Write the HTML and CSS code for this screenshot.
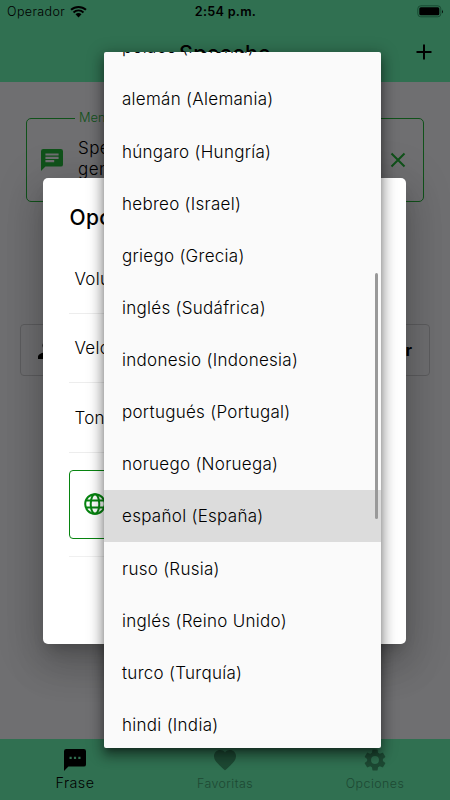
FILE: index.html
```html
<!DOCTYPE html>
<html lang="es">
<head>
<meta charset="utf-8">
<title>Speeche</title>
<link rel="stylesheet" href="styles.css">
</head>
<body>
<div class="app">
  <header class="topbar">
    <div class="status">
      <span class="carrier">Operador
        <svg width="17" height="13" viewBox="0 0 17 13"><path d="M1 4.800C5.300.9 11.700.9 16 4.800M3.500 7.400c2.900-2.600 7.100-2.600 10 0" fill="none" stroke="#000" stroke-width="2"/><path d="M5.500 9.200c1.700-1.500 4.300-1.500 6 0l-3 3.200z"/></svg>
      </span>
      <span class="time">2:54 p.m.</span>
      <svg class="battery" width="27" height="13" viewBox="0 0 27 13"><rect x=".8" y=".8" width="23" height="11" rx="3" fill="none" stroke="#184b32"/><rect x="2.300" y="2.300" width="20" height="8" rx="1.500"/><path d="M25 4.500q1.600 2 0 4z"/></svg>
    </div>
    <div class="titlebar"><h1>Speeche</h1>
      <svg class="plus" width="16" height="16" viewBox="0 0 16 16"><path d="M8 .5v15M.5 8h15" stroke="#000" stroke-width="2"/></svg>
    </div>
  </header>
  <main>
    <fieldset class="message"><legend>Mensaje</legend>
      <svg class="chat" width="22" height="22" viewBox="2 2 20 20"><path fill="#10521a" d="M20 2H4a2 2 0 0 0-2 2v18l4-4h14a2 2 0 0 0 2-2V4a2 2 0 0 0-2-2zM6 9h12v2H6zm8 5H6v-2h8zm4-6H6V6h12z"/></svg>
      <p>Speeche<br>genera</p>
      <svg class="clear" width="16" height="16" viewBox="0 0 16 16"><path d="M1.500 1.500l13 13m0-13l-13 13" stroke="#10521a" stroke-width="2"/></svg>
    </fieldset>
    <div class="player">
      <svg width="18" height="18" viewBox="4 4 16 16"><path d="M12 12a4 4 0 1 0 0-8 4 4 0 0 0 0 8zm0 2c-2.700 0-8 1.300-8 4v2h16v-2c0-2.700-5.300-4-8-4z"/></svg>
      <b>Reproducir</b>
    </div>
  </main>
  <nav class="tabs">
    <div class="tab active"><svg width="22" height="22" viewBox="2 2 20 20"><path d="M20 2H4a2 2 0 0 0-2 2v18l4-4h14a2 2 0 0 0 2-2V4a2 2 0 0 0-2-2zM9 11H7V9h2zm4 0h-2V9h2zm4 0h-2V9h2z"/></svg><span>Frase</span></div>
    <div class="tab"><svg width="22" height="22" viewBox="2 2 20 20"><path d="M12 21.400l-1.500-1.300C5.400 15.400 2 12.300 2 8.500 2 5.400 4.400 3 7.500 3c1.700 0 3.400.8 4.500 2.100C13.100 3.800 14.800 3 16.500 3 19.600 3 22 5.400 22 8.500c0 3.800-3.400 6.900-8.500 11.600z"/></svg><span>Favoritas</span></div>
    <div class="tab"><svg width="22" height="22" viewBox="2 2 20 20"><path d="M19.140 12.940a7 7 0 0 0 0-1.880l2.030-1.580a.5.5 0 0 0 .12-.61l-1.920-3.320a.5.5 0 0 0-.59-.22l-2.390.96a7 7 0 0 0-1.620-.94l-.36-2.540A.5.500 0 0 0 13.930 2.400h-3.840a.5.500 0 0 0-.47.410l-.36 2.540a7 7 0 0 0-1.620.94l-2.390-.96a.5.500 0 0 0-.59.220L2.740 8.870a.5.500 0 0 0 .12.610l2.030 1.580a7 7 0 0 0 0 1.880l-2.030 1.580a.5.500 0 0 0-.12.610l1.920 3.320a.5.500 0 0 0 .59.220l2.390-.96a7 7 0 0 0 1.620.94l.36 2.540a.5.500 0 0 0 .48.410h3.840a.5.500 0 0 0 .47-.41l.36-2.540a7 7 0 0 0 1.620-.94l2.390.96a.5.500 0 0 0 .59-.22l1.920-3.320a.5.500 0 0 0-.12-.61zM12 15.600a3.600 3.600 0 1 1 0-7.200 3.600 3.600 0 0 1 0 7.200z"/></svg><span>Opciones</span></div>
  </nav>
</div>
<section class="dialog">
  <h2>Opciones</h2>
  <div class="option">Volumen</div>
  <div class="option">Velocidad</div>
  <div class="option">Tono</div>
  <div class="language"><div class="select"><svg width="22" height="22" viewBox="0 0 22 22"><g fill="none" stroke="#078410" stroke-width="2"><circle cx="11" cy="11" r="9.800"/><ellipse cx="11" cy="11" rx="4.300" ry="9.800"/><path d="M2 7.500h18M2 14.500h18"/></g></svg></div></div>
</section>
<div class="menu">
  <ul>
    <li>polaco (Polonia)</li>
    <li>alemán (Alemania)</li>
    <li>húngaro (Hungría)</li>
    <li>hebreo (Israel)</li>
    <li>griego (Grecia)</li>
    <li>inglés (Sudáfrica)</li>
    <li>indonesio (Indonesia)</li>
    <li>portugués (Portugal)</li>
    <li>noruego (Noruega)</li>
    <li class="selected">español (España)</li>
    <li>ruso (Rusia)</li>
    <li>inglés (Reino Unido)</li>
    <li>turco (Turquía)</li>
    <li>hindi (India)</li>
  </ul>
  <div class="scrollbar"></div>
</div>
</body>
</html>
```
FILE: styles.css
```css
* { box-sizing: border-box; }
body { margin: 0; font-family: Inter, "Liberation Sans", sans-serif; color: #000; }
svg { display: block; flex: none; }
.app { width: 450px; height: 800px; display: flex; flex-direction: column; background: #6f6f71; overflow: hidden; }
.topbar { height: 82px; background: #307051; flex: none; }
.status { height: 22px; display: grid; grid-template-columns: 1fr auto 1fr; align-items: center; padding: 0 6px 0 7px; font-size: 13px; }
.carrier { display: flex; align-items: center; gap: 5px; font-size: 12.500px; font-weight: 350; letter-spacing: .4px; }
.time { font-size: 12.700px; font-weight: 600; letter-spacing: .25px; }
.battery { justify-self: end; }
.titlebar { height: 60px; display: grid; grid-template-columns: 1fr auto 1fr; align-items: center; padding: 0 18px; }
h1 { grid-column: 2; margin: 0; padding-top: 2px; font-size: 21.500px; font-weight: 500; line-height: 26px; letter-spacing: .2px; }
.plus { justify-self: end; }
main { flex: 1; padding: 29px 20px 0; }
.message { margin: 0 6px; height: 91px; padding: 0 17px 0 14px; border: 1px solid #10521a; border-radius: 5px; display: flex; align-items: flex-start; min-width: 0; }
legend { margin-left: 34px; padding: 0 4px; font-size: 12.800px; font-weight: 350; line-height: 14px; color: #10521a; }
.chat { margin-top: 24px; }
.message p { margin: 13px 0 0 15px; flex: 1; font-size: 17px; font-weight: 300; line-height: 21px; letter-spacing: .4px; }
.clear { margin-top: 27px; }
.player { margin-top: 122px; height: 52px; border: 1px solid #5d5d5f; border-radius: 4px; padding: 0 17px; display: flex; align-items: center; justify-content: space-between; font-size: 16px; }
.tabs { height: 61px; background: #307051; display: grid; grid-template-columns: repeat(3, 1fr); flex: none; }
.tab { display: flex; flex-direction: column; align-items: center; padding-top: 10px; color: #1d4933; fill: #1d4933; font-size: 12.400px; font-weight: 350; letter-spacing: .45px; }
.tab span { margin-top: 5px; line-height: 16px; }
.tab.active { color: #000; fill: #000; font-size: 14.300px; }
.tab.active span { margin-top: 4px; }
.dialog { position: absolute; left: 43.400px; top: 178px; width: 363px; height: 466px; background: #fff; border-radius: 5px; padding: 27px 26px 0; box-shadow: 0 10px 14px -6px rgba(0,0,0,.2), 0 22px 36px 3px rgba(0,0,0,.14), 0 8px 44px 8px rgba(0,0,0,.12); }
h2 { margin: 0 0 13px; font-size: 21px; font-weight: 450; line-height: 26px; letter-spacing: .4px; }
.option { height: 69.500px; padding: 1px 5px 0; display: flex; align-items: center; border-bottom: 1px solid #ededed; font-size: 17px; font-weight: 300; letter-spacing: .3px; }
.language { height: 104px; padding-top: 17px; border-bottom: 1px solid #f0f0f0; }
.select { height: 69px; padding-left: 14px; display: flex; align-items: center; border: 1px solid #078410; border-radius: 4px; }
.menu { position: absolute; left: 104px; top: 52px; width: 276.600px; height: 696px; overflow: hidden; background: #fafafa; border-radius: 2px; box-shadow: 0 5px 6px -3px rgba(0,0,0,.35), 0 8px 11px 1px rgba(0,0,0,.24), 0 3px 15px 3px rgba(0,0,0,.25); }
.menu ul { list-style: none; margin: -31px 0 0; padding: 0; }
.menu li { height: 52.150px; padding: .3px 0 0 18px; display: flex; align-items: center; font-size: 17px; font-weight: 300; letter-spacing: .28px; }
.menu .selected { background: #dcdcdc; }
.scrollbar { position: absolute; right: 3px; top: 221px; width: 3px; height: 246px; border-radius: 2px; background: #999; }
```
